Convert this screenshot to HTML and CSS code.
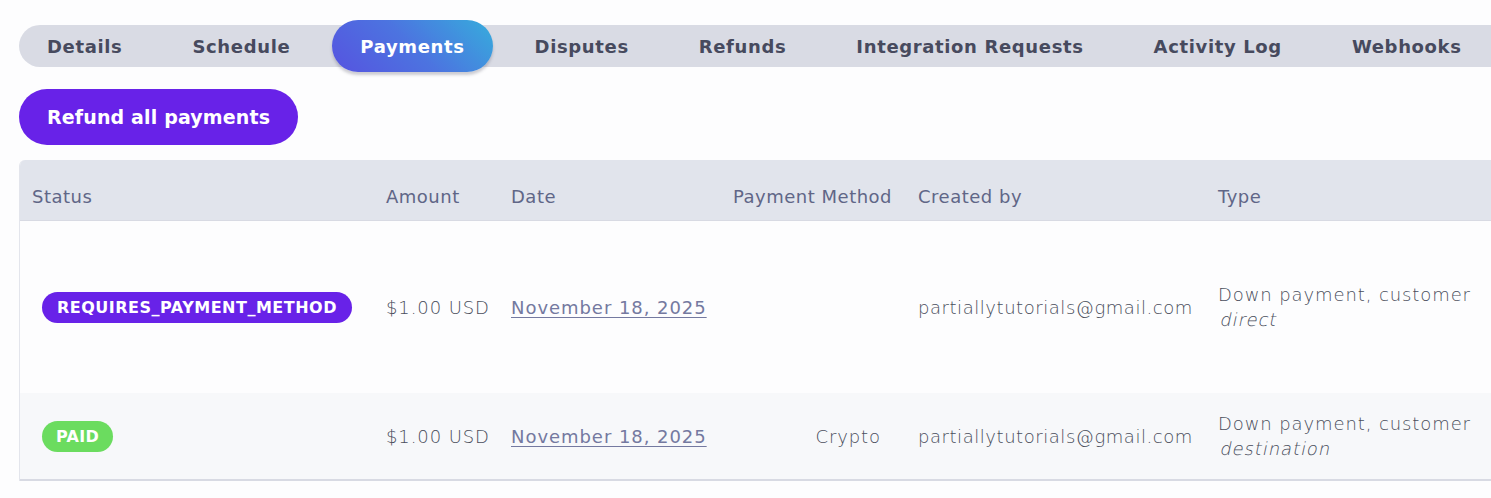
FILE: index.html
```html
<!DOCTYPE html>
<html>
<head>
<meta charset="utf-8">
<link rel="stylesheet" href="styles.css">
</head>
<body>
<div class="page">
  <nav class="tabs">
    <span class="tab">Details</span>
    <span class="tab">Schedule</span>
    <span class="tab active">Payments</span>
    <span class="tab">Disputes</span>
    <span class="tab">Refunds</span>
    <span class="tab">Integration Requests</span>
    <span class="tab">Activity Log</span>
    <span class="tab">Webhooks</span>
  </nav>
  <div class="actions">
    <button class="btn">Refund all payments</button>
  </div>
  <div class="table-wrap">
    <table class="payments">
      <colgroup>
        <col class="c-status"><col class="c-amount"><col class="c-date"><col class="c-method"><col class="c-created"><col class="c-type">
      </colgroup>
      <thead>
        <tr>
          <th>Status</th>
          <th>Amount</th>
          <th>Date</th>
          <th>Payment Method</th>
          <th>Created by</th>
          <th>Type</th>
        </tr>
      </thead>
      <tbody>
        <tr class="row-tall">
          <td><span class="badge badge-purple">REQUIRES_PAYMENT_METHOD</span></td>
          <td>$1.00 USD</td>
          <td><a class="date-link">November 18, 2025</a></td>
          <td class="method"></td>
          <td><span class="ellipsis">partiallytutorials@gmail.com</span></td>
          <td class="type">Down payment, customer<br><em class="variant">direct</em></td>
        </tr>
        <tr class="row-alt">
          <td><span class="badge badge-green">PAID</span></td>
          <td>$1.00 USD</td>
          <td><a class="date-link">November 18, 2025</a></td>
          <td class="method">Crypto</td>
          <td><span class="ellipsis">partiallytutorials@gmail.com</span></td>
          <td class="type">Down payment, customer<br><em class="variant">destination</em></td>
        </tr>
      </tbody>
    </table>
  </div>
</div>
</body>
</html>
```

FILE: styles.css
```css
html, body {
  margin: 0;
  padding: 0;
  background: #fdfdfe;
  overflow: hidden;
}
body {
  font-family: "DejaVu Sans", "Open Sans", sans-serif;
}
.page {
  padding: 25px 0 0 19px;
  width: 1520px;
}
.tabs {
  display: flex;
  align-items: center;
  gap: 14px;
  height: 42px;
  background: #d9dbe4;
  border-radius: 21px 0 0 21px;
  width: 1500px;
}
.tab {
  display: flex;
  align-items: center;
  padding: 0 28px;
  height: 42px;
  font-weight: 700;
  font-size: 18px;
  letter-spacing: 0.64px;
  color: #474a5e;
  white-space: nowrap;
}
.tab.active {
  height: 52px;
  margin: -5px 0;
  border-radius: 26px;
  color: #ffffff;
  background: linear-gradient(45deg, #5653e0 0%, #4c74e0 50%, #36addc 100%);
  box-shadow: 0 3px 3px rgba(60, 60, 80, 0.25);
}
.actions {
  padding-top: 22px;
}
.btn {
  height: 56px;
  padding: 0 28px;
  border: 0;
  border-radius: 28px;
  background: #6822e8;
  color: #ffffff;
  font-family: inherit;
  font-weight: 700;
  font-size: 19px;
  letter-spacing: 0.15px;
}
.table-wrap {
  margin-top: 15px;
  border-left: 1px solid #e3e5ec;
  border-radius: 6px 0 0 0;
  overflow: hidden;
  width: 1490px;
}
.payments {
  border-collapse: collapse;
  table-layout: fixed;
  width: 1488px;
}
.c-status { width: 354px; }
.c-amount { width: 125px; }
.c-date { width: 222px; }
.c-method { width: 185px; }
.c-created { width: 300px; }
.c-type { width: 302px; }
th {
  background: #e1e4ec;
  height: 48px;
  text-align: left;
  font-weight: 400;
  font-size: 18px;
  letter-spacing: 0.5px;
  color: #606687;
  padding: 12px 12px 0;
  border-bottom: 1px solid #d8dae3;
  white-space: nowrap;
}
td {
  padding: 0 12px;
  font-weight: 300;
  font-size: 18px;
  letter-spacing: 0.9px;
  color: #4a4e5c;
  white-space: nowrap;
  line-height: 25px;
}
.row-tall td { height: 172px; }
.row-alt td {
  height: 86px;
  background: #f7f8fa;
  border-bottom: 2px solid #d8dae3;
}
.badge {
  display: inline-block;
  margin-left: 10px;
  height: 31px;
  line-height: 31px;
  padding: 0 15px;
  border-radius: 16px;
  color: #ffffff;
  font-weight: 700;
  font-size: 16px;
  letter-spacing: 0.5px;
}
.badge-purple { background: #6822e8; }
.badge-green {
  background: #6bdc5f;
  padding: 0 14px;
  letter-spacing: 0.3px;
}
.date-link {
  color: #7479a0;
  font-weight: 400;
  letter-spacing: 0.95px;
  text-decoration: underline;
  text-underline-offset: 3px;
}
.method {
  text-align: right;
  padding-right: 25px;
}
.ellipsis {
  display: block;
  overflow: hidden;
  text-overflow: ellipsis;
  letter-spacing: 0.55px;
}
.variant {
  display: inline-block;
  font-style: normal;
  font-weight: 300;
  transform: skewX(-12deg);
  transform-origin: left bottom;
}
```
